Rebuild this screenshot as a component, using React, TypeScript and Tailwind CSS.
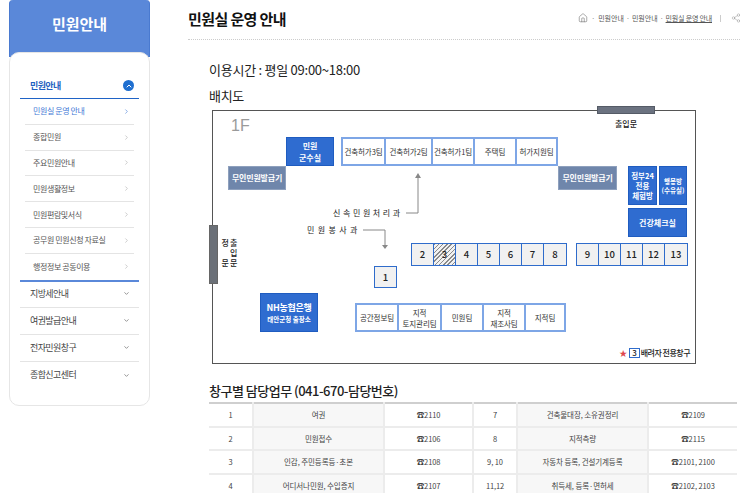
import { ChevronDown, ChevronRight, ChevronUp, Home, Share2 } from "lucide-react";

const subMenu = [
  "민원실 운영 안내",
  "종합민원",
  "주요민원안내",
  "민원생활정보",
  "민원편람및서식",
  "공무원 민원신청 자료실",
  "행정정보 공동이용",
];

const mainMenu = ["지방세안내", "여권발급안내", "전자민원창구", "종합신고센터"];

const rows = [
  ["1", "여권", "2110", "7", "건축물대장, 소유권정리", "2109"],
  ["2", "민원접수", "2106", "8", "지적측량", "2115"],
  ["3", "인감, 주민등록등·초본", "2108", "9, 10", "자동차 등록, 건설기계등록", "2101, 2100"],
  ["4", "어디서나민원, 수입증지", "2107", "11,12", "취득세, 등록·면허세", "2102, 2103"],
];

function Sidebar() {
  return (
    <aside className="w-[141px] ml-[9px] shrink-0">
      <div className="h-[57px] bg-[#5a88d9] rounded-t-sm border-x border-[#4a7ad0] pt-[13px] text-center text-white text-[15px] leading-[22px] font-semibold">
        민원안내
      </div>
      <div className="-mt-[5px] h-[354px] relative bg-white rounded-[10px] border border-[#e6e6e6] px-[10px] pt-[22px]">
        <div className="h-[24px] border-b border-[#1f63c6] flex items-center justify-between pl-[10px] pr-[5px] pb-[2px] text-[9px] tracking-[-0.6px] font-bold text-[#1f5fc0]">
          민원안내
          <span className="w-[11px] h-[11px] rounded-full bg-[#1f6fd0] flex items-center justify-center">
            <ChevronUp size={8} strokeWidth={3} className="text-white" />
          </span>
        </div>
        <ul className="px-[5px] border-b-2 border-[#5a88d9]">
          {subMenu.map((item, i) => (
            <li
              key={item}
              className={`h-[25.8px] flex items-center justify-between pl-[8px] pr-[4px] text-[8px] tracking-[-0.4px] border-[#e4e4e4] ${i < 6 ? "border-b" : ""} ${i === 0 ? "text-[#3f78d6]" : "text-[#555555]"}`}
            >
              {item}
              <ChevronRight size={7} className={i === 0 ? "text-[#3f78d6]" : "text-[#aaaaaa]"} />
            </li>
          ))}
        </ul>
        <ul className="-mt-[1px]">
          {mainMenu.map((item, i) => (
            <li
              key={item}
              className={`h-[27px] flex items-center justify-between pl-[10px] pr-[9px] text-[9px] tracking-[-0.6px] text-[#444444] border-[#e4e4e4] ${i < 3 ? "border-b" : ""}`}
            >
              {item}
              <ChevronDown size={7} strokeWidth={3} className="text-[#888888]" />
            </li>
          ))}
        </ul>
      </div>
    </aside>
  );
}

function Header() {
  return (
    <header className="h-[40px] border-b border-dotted border-[#cccccc] flex items-center justify-between">
      <h1 className="text-[15px] tracking-[-0.6px] font-bold text-[#111111] leading-none -mt-[2px]">민원실 운영 안내</h1>
      <div className="flex items-center text-[7px] text-[#555555] -mt-[3px] -mr-[1px]">
        <Home size={10} strokeWidth={1.5} className="text-[#777777]" />
        <span className="mx-[3px] text-[#888888]">·</span>
        <span>민원안내</span>
        <span className="mx-[2px] text-[#888888]">·</span>
        <span>민원안내</span>
        <span className="mx-[2px] text-[#888888]">·</span>
        <span className="underline tracking-[-0.2px]">민원실 운영 안내</span>
        <span className="w-px h-[7px] bg-[#cccccc] ml-[8px] mr-[10px]" />
        <Share2 size={10} strokeWidth={1} className="text-[#888888]" />
      </div>
    </header>
  );
}

function NumberCell({ label, hatched }: { label: string; hatched?: boolean }) {
  return (
    <div
      className={`w-[22px] flex items-center justify-center border-r border-[#2f6ccb] last:border-r-0 text-[9.5px] font-medium text-[#222222] ${hatched ? "bg-[repeating-linear-gradient(135deg,#8a8a8a_0,#8a8a8a_1px,#f2f2f2_1px,#f2f2f2_3px)]" : "bg-[#f1f1f1]"}`}
    >
      {label}
    </div>
  );
}

function TeamCell({ className, children }: { className: string; children: React.ReactNode }) {
  return (
    <div className={`${className} h-full flex items-center justify-center text-center whitespace-nowrap text-[7.5px] tracking-[-0.1px] leading-[11px] text-[#333333] border-r-2 border-[#7ea6e6] last:border-r-0`}>
      {children}
    </div>
  );
}

function FloorPlan() {
  const blue = "absolute flex items-center justify-center text-center whitespace-nowrap bg-[#2f6cd0] border border-[#1f5cc0] text-white font-semibold";
  const gray = "absolute flex items-center justify-center whitespace-nowrap bg-[#6f86ab] border border-[#8ea0bd] text-white text-[8px] tracking-[-0.2px] font-semibold";
  return (
    <div className="relative w-[484px] h-[254px] mt-[4px] ml-[3px] border border-[#555555] bg-white text-[#222222]">
      <span className="absolute left-[18px] top-[5px] text-[16px] leading-5 text-[#9a9a9a] font-['Liberation_Sans',sans-serif]">1F</span>

      <div className="absolute left-[384px] -top-[5px] w-[58px] h-[8px] bg-[#6b7280] border border-[#555b66]" />
      <span className="absolute left-[402px] top-[7px] text-[8px] leading-[11px] font-medium">출입문</span>

      <div className="absolute -left-[4px] top-[114px] w-[9px] h-[59px] bg-[#6b7078] border border-[#666666]" />
      <div className="absolute left-[8px] top-[127px] grid grid-cols-2 w-[17px] text-[8px] leading-[10px] font-medium text-center">
        <span>정</span>
        <span>출</span>
        <span />
        <span>입</span>
        <span>문</span>
        <span>문</span>
      </div>

      <div className={`${blue} left-[73px] top-[26px] w-[48px] h-[29px] text-[8px] leading-[12px]`}>
        민원
        <br />
        군수실
      </div>

      <div className="absolute left-[128px] top-[26px] w-[217px] h-[29px] flex border-2 border-[#7ea6e6] bg-white">
        <TeamCell className="w-[43px]">건축허가3팀</TeamCell>
        <TeamCell className="w-[47px]">건축허가2팀</TeamCell>
        <TeamCell className="w-[42px]">건축허가1팀</TeamCell>
        <TeamCell className="w-[42px]">주택팀</TeamCell>
        <TeamCell className="flex-1">허가지원팀</TeamCell>
      </div>

      <div className={`${gray} left-[15px] top-[55px] w-[58px] h-[24px]`}>무인민원발급기</div>
      <div className={`${gray} left-[345px] top-[55px] w-[59px] h-[24px]`}>무인민원발급기</div>

      <div className={`${blue} left-[415px] top-[55px] w-[29px] h-[39px] text-[7.5px] leading-[10px]`}>
        정부24
        <br />
        전용
        <br />
        체험방
      </div>
      <div className={`${blue} left-[446px] top-[55px] w-[28px] h-[39px] text-[6.5px] leading-[9px]`}>
        행봉방
        <br />
        (수유실)
      </div>
      <div className={`${blue} left-[415px] top-[97px] w-[59px] h-[29px] text-[8px]`}>건강체크실</div>

      <span className="absolute left-[120px] top-[96px] text-[8px] leading-[12px] tracking-[2.6px]">신속민원처리과</span>
      <span className="absolute left-[94px] top-[113px] text-[8px] leading-[12px] tracking-[3.4px]">민원봉사과</span>
      <svg className="absolute left-[145px] top-[60px]" width="70" height="85" viewBox="0 0 70 85" fill="none">
        <path d="M48 42H60V6" stroke="#888888" />
        <path d="M57 7L60 2L63 7Z" fill="#888888" />
        <path d="M5 59H27V74" stroke="#888888" />
        <path d="M24 74L27 78L30 74Z" fill="#888888" />
      </svg>

      <div className="absolute left-[198px] top-[132px] h-[23px] flex border border-[#2f6ccb]">
        {["2", "3", "4", "5", "6", "7", "8"].map((n) => (
          <NumberCell key={n} label={n} hatched={n === "3"} />
        ))}
      </div>
      <div className="absolute left-[363px] top-[132px] h-[23px] flex border border-[#2f6ccb]">
        {["9", "10", "11", "12", "13"].map((n) => (
          <NumberCell key={n} label={n} />
        ))}
      </div>
      <div className="absolute left-[161px] top-[155px] w-[23px] h-[22px] flex items-center justify-center border border-[#2f6ccb] bg-[#f1f1f1] text-[9.5px] font-medium">
        1
      </div>

      <div className={`${blue} flex-col left-[47px] top-[182px] w-[58px] h-[39px]`}>
        <span className="text-[9px] tracking-[-0.3px] leading-[13px]">NH농협은행</span>
        <span className="text-[6.5px] leading-[10px]">태안군청 출장소</span>
      </div>

      <div className="absolute left-[142px] top-[192px] w-[211px] h-[29px] flex border-2 border-[#7ea6e6] bg-white">
        <TeamCell className="w-[42px]">공간정보팀</TeamCell>
        <TeamCell className="w-[43px]">
          <span>
            지적
            <br />
            토지관리팀
          </span>
        </TeamCell>
        <TeamCell className="w-[42px]">민원팀</TeamCell>
        <TeamCell className="w-[42px]">
          <span>
            지적
            <br />
            재조사팀
          </span>
        </TeamCell>
        <TeamCell className="flex-1">지적팀</TeamCell>
      </div>

      <div className="absolute right-[5px] bottom-[5px] flex items-center gap-[1px] text-[8px] tracking-[-0.5px] leading-[10px] font-medium">
        <span className="text-[#e0474c] text-[8px]">★</span>
        <span className="w-[11px] h-[10px] ml-[1px] flex items-center justify-center border border-[#2f6ccb] text-[8px]">3</span>
        <span>배려자 전용창구</span>
      </div>
    </div>
  );
}

function PhoneNumber({ value }: { value: string }) {
  return <td className="text-center">☎{value}</td>;
}

function WindowTable() {
  return (
    <table className="w-[528px] table-fixed border-t-2 border-[#cfcfcf] text-[7.5px] tracking-[-0.1px] text-[#444444]">
      <colgroup>
        <col className="w-[44px]" />
        <col className="w-[131px]" />
        <col className="w-[89px]" />
        <col className="w-[44px]" />
        <col className="w-[131px]" />
        <col className="w-[89px]" />
      </colgroup>
      <tbody>
        {rows.map((row) => (
          <tr key={row[0]} className="h-[23.5px] border-b-2 border-[#ececec]">
            <td className="text-center">{row[0]}</td>
            <td className="text-center bg-[#f7f7f7] border-x-2 border-[#ececec]">{row[1]}</td>
            <PhoneNumber value={row[2]} />
            <td className="text-center border-l-2 border-[#ececec]">{row[3]}</td>
            <td className="text-center bg-[#f7f7f7] border-x-2 border-[#ececec]">{row[4]}</td>
            <PhoneNumber value={row[5]} />
          </tr>
        ))}
      </tbody>
    </table>
  );
}

export default function App() {
  return (
    <div className="flex w-[740px] h-[493px] overflow-hidden bg-white font-['Noto_Sans_CJK_KR','Noto_Sans',sans-serif]">
      <Sidebar />
      <main className="ml-[38px] flex-1 min-w-0">
        <Header />
        <section className="pl-[21px]">
          <p className="mt-[20px] text-[13px] tracking-[-0.25px] leading-[20px] text-[#222222]">이용시간 : 평일 09:00~18:00</p>
          <h2 className="mt-[6px] text-[13px] tracking-[-0.3px] leading-[20px] text-[#222222]">배치도</h2>
          <FloorPlan />
          <h2 className="mt-[17px] mb-[1px] text-[13px] tracking-[-0.5px] leading-[20px] font-medium text-[#222222]">
            창구별 담당업무 (041-670-담당번호)
          </h2>
          <WindowTable />
        </section>
      </main>
    </div>
  );
}
